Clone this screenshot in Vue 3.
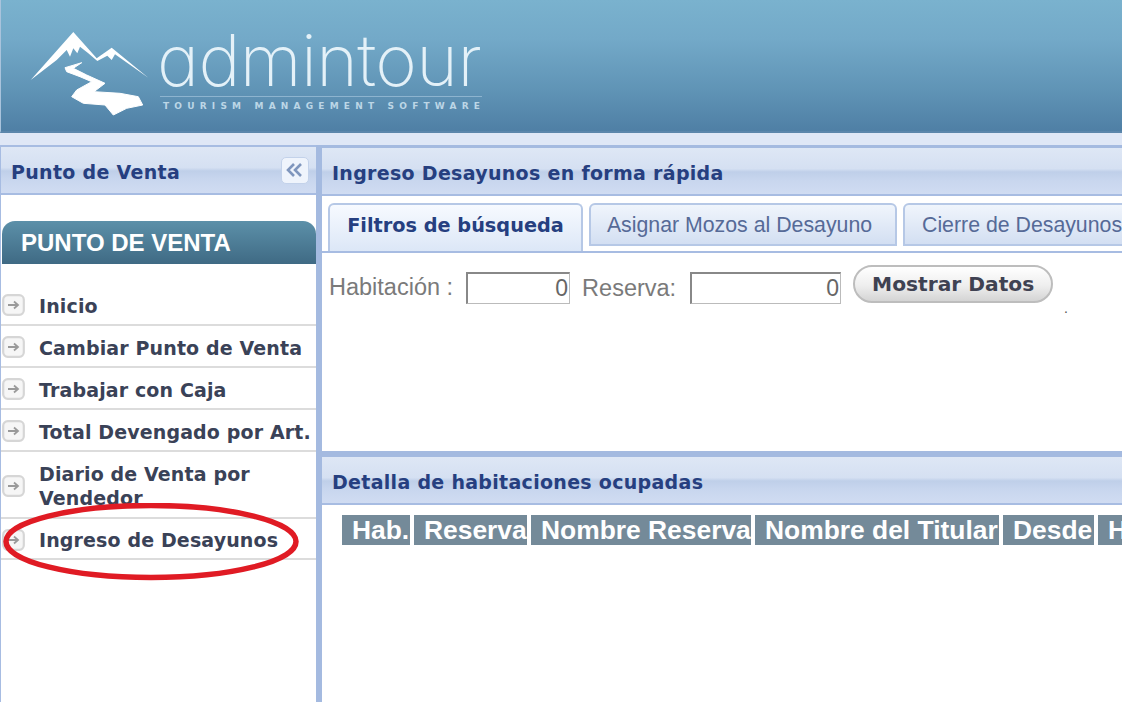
<script setup>
const menu = [
  { label: 'Inicio', cls: 'h42' },
  { label: 'Cambiar Punto de Venta', cls: 'h42' },
  { label: 'Trabajar con Caja', cls: 'h42' },
  { label: 'Total Devengado por Art.', cls: 'h42' },
  { label: 'Diario de Venta por Vendedor', cls: 'h67' },
  { label: 'Ingreso de Desayunos', cls: 'h41' },
]
const columns = [
  { label: 'Hab.', w: 68 },
  { label: 'Reserva', w: 113 },
  { label: 'Nombre Reserva', w: 220 },
  { label: 'Nombre del Titular', w: 244 },
  { label: 'Desde', w: 91 },
  { label: 'Hasta', w: 91 },
]
</script>

<template>
  <div class="page">
    <header class="banner">
      <div class="logo">
        <svg class="mark" viewBox="0 0 130 90" width="130" height="90">
          <path d="M0.7 48 L43.3 0 L66.7 26.3 L81.7 15.7 L118.3 45.7 L85 22.3 L81.7 28 L77.3 23.7 L67.3 29 L58.3 21.3 L50 14.7 L47.3 21.3 L43.3 16.3 L40 24.7 L36.7 18 L26.7 28 Z" fill="#fff" />
          <path d="M35 35.7 L51.7 30.7 L43.3 36.3 L56.7 43 L75 51.3 L64 59.7 L90 61.3 L108.3 64.7 L112.7 73 L96.7 76.3 L83.3 83 L75 73 L53.3 71.3 L41.7 64.7 L46.7 58 L61.7 49.7 L50 44.7 L36.7 39.7 Z" fill="#fff" stroke="#fff" stroke-width="1" stroke-linejoin="round" />
        </svg>
        <div class="brand">
          <div class="word">admintour</div>
          <div class="tag">TOURISM MANAGEMENT SOFTWARE</div>
        </div>
      </div>
    </header>

    <div class="workspace">
      <aside class="side">
        <div class="panel-head side-head">
          <span>Punto de Venta</span>
          <button class="collapse" aria-label="Contraer">
            <svg viewBox="0 0 20 16" width="20" height="16">
              <path d="M9 2 L3 8 L9 14 M16 2 L10 8 L16 14" fill="none" stroke="#7f96bd" stroke-width="2.6" />
            </svg>
          </button>
        </div>
        <div class="side-body">
          <h2 class="section">PUNTO DE VENTA</h2>
          <ul class="menu">
            <li v-for="item in menu" :key="item.label" :class="item.cls">
              <svg class="arrow" viewBox="0 0 23 22" width="23" height="22">
                <rect x="1.2" y="1.2" width="20.6" height="19.6" rx="4.5" fill="#f6f6f6" stroke="#d6d6d6" stroke-width="2.2" />
                <path d="M6 11 H15 M12 7.5 L16 11 L12 14.5" fill="none" stroke="#9a9a9a" stroke-width="1.8" />
              </svg>
              <span class="menu-text">{{ item.label }}</span>
            </li>
          </ul>
          <svg class="circle" viewBox="0 0 296 78" width="296" height="78">
            <ellipse cx="148" cy="38.5" rx="145" ry="36" fill="none" stroke="#e01b24" stroke-width="5.5" />
          </svg>
        </div>
      </aside>

      <main class="content">
        <section class="filters">
          <div class="panel-head">Ingreso Desayunos en forma rápida</div>
          <nav class="tabs">
            <div class="tab active">Filtros de búsqueda</div>
            <div class="tab t2">Asignar Mozos al Desayuno</div>
            <div class="tab t3">Cierre de Desayunos</div>
          </nav>
          <div class="form">
            <label class="lab">Habitación :</label>
            <input class="num n1" value="0" />
            <label class="lab l2">Reserva:</label>
            <input class="num n2" value="0" />
            <button class="show">Mostrar Datos</button>
            <span class="dot">.</span>
          </div>
        </section>
        <section class="detail">
          <div class="panel-head">Detalla de habitaciones ocupadas</div>
          <div class="cols">
            <div v-for="c in columns" :key="c.label" class="col" :style="{ flexBasis: c.w + 'px' }">{{ c.label }}</div>
          </div>
        </section>
      </main>
    </div>
  </div>
</template>

<style scoped>
.page {
  width: 1122px;
  height: 716px;
  overflow: hidden;
  background: #fff;
  font-family: "Liberation Sans", Arial, sans-serif;
}
.banner {
  height: 133px;
  box-sizing: border-box;
  border-left: 1px solid #a9c3dc;
  border-bottom: 2px solid #5b86ab;
  background: linear-gradient(#7ab2ce, #73a9c8 30%, #5f93b5 70%, #4f7fa5);
  padding: 32px 0 0 29px;
}
.logo { display: flex; align-items: flex-start; }
.mark { flex: none; overflow: visible; }
.brand { width: 322px; }
.word {
  font-family: Inter, "Liberation Sans", sans-serif;
  font-feature-settings: "cv11" 1;
  font-weight: 250;
  font-size: 71px;
  line-height: 56px;
  height: 62px;
  margin-left: -3px;
  letter-spacing: -0.6px;
  color: #e4f1f8;
  white-space: nowrap;
}
.tag {
  margin-top: 2px;
  border-top: 1px solid #8db4cf;
  padding: 5px 0 0 3px;
  font-family: "DejaVu Sans", sans-serif;
  font-weight: 700;
  font-size: 9px;
  letter-spacing: 5.2px;
  line-height: 9px;
  color: #bcd6e6;
  white-space: nowrap;
}
.workspace {
  height: 569px;
  box-sizing: border-box;
  background: #dfe7f6;
  padding-top: 12px;
  display: grid;
  grid-template-columns: 316px 6px 1fr;
  grid-template-rows: 557px;
}
.side {
  grid-column: 1;
  display: flex;
  flex-direction: column;
  background: #fff;
  border-left: 1px solid #a7bce2;
  border-top: 2px solid #a7bce2;
  box-sizing: border-box;
}
.content {
  grid-column: 2 / 4;
  border-left: 6px solid #a4bae0;
  display: flex;
  flex-direction: column;
  background: #fff;
  min-width: 0;
}
.panel-head {
  box-sizing: border-box;
  height: 48px;
  flex: none;
  display: flex;
  align-items: center;
  padding: 3px 0 0 10px;
  font-family: "DejaVu Sans", sans-serif;
  font-weight: 700;
  font-size: 19px;
  letter-spacing: 0.3px;
  color: #263f80;
  background: linear-gradient(#dee7f5, #d5e0f2 45%, #bfcfe9 52%, #c8d6ee 70%, #d0dcf2);
  border-bottom: 2px solid #a7bce2;
  white-space: nowrap;
}
.side-head {
  justify-content: space-between;
  padding: 0 7px 0 10px;
}
.side-head span { margin-top: 4px; }
.collapse {
  width: 28px;
  height: 27px;
  padding: 0;
  display: flex;
  align-items: center;
  justify-content: center;
  background: #eff4fc;
  border: 1px solid #c3d2ea;
  border-radius: 5px;
}
.side-body { position: relative; flex: 1; padding-top: 26px; }
.section {
  margin: 0 0 0 1px;
  height: 43px;
  box-sizing: border-box;
  padding-left: 19px;
  display: flex;
  align-items: center;
  border-radius: 13px 13px 0 0;
  background: linear-gradient(#5c90a9, #3f6a84);
  color: #fff;
  font-size: 24px;
  font-weight: 700;
}
.menu { list-style: none; margin: 20px 0 0; padding: 0; }
.menu li {
  box-sizing: border-box;
  display: flex;
  align-items: center;
  padding-left: 1px;
  border-bottom: 2px solid #dcdcdc;
  font-family: "DejaVu Sans", sans-serif;
  font-weight: 700;
  font-size: 19px;
  line-height: 24px;
  color: #3a4257;
  letter-spacing: 0.13px;
}
.menu .arrow { flex: none; margin: 2px 14px 0 0; }
.menu-text { padding-top: 2px; }
.h42 .menu-text { padding-top: 4px; }
.h42 { height: 42px; }
.h67 { height: 67px; }
.h41 { height: 41px; }
.circle { position: absolute; left: 2px; top: 308px; }
.filters { height: 306px; box-sizing: border-box; display: flex; flex-direction: column; border-top: 3px solid #a4bae0; }
.tabs {
  height: 57px;
  box-sizing: border-box;
  display: flex;
  align-items: flex-start;
  padding: 7px 0 0 6px;
  border-bottom: 2px solid #a7bce2;
  background: #fff;
}
.tab {
  box-sizing: border-box;
  height: 43px;
  margin-right: 6px;
  flex: none;
  display: flex;
  align-items: center;
  justify-content: center;
  padding-top: 1px;
  background: linear-gradient(#f0f5fc, #d3dff2);
  border: 2px solid #b6c8e6;
  border-radius: 6px 6px 0 0;
  color: #566a97;
  font-size: 21.3px;
  white-space: nowrap;
}
.tab.active {
  width: 255px;
  height: 48px;
  padding: 0 0 5px;
  border-bottom: 0;
  background: linear-gradient(#f7faff, #dce7f7);
  color: #263f80;
  font-family: "DejaVu Sans", sans-serif;
  font-weight: 700;
  font-size: 19.3px;
}
.t2 { width: 308px; padding-right: 7px; }
.t3 { width: 240px; justify-content: flex-start; padding-left: 17px; }
.form {
  position: relative;
  display: flex;
  align-items: flex-start;
  padding: 12px 0 0 7px;
  color: #7a7a7a;
  font-size: 23.5px;
}
.lab { margin-top: 9px; line-height: 26px; }
.l2 { margin-left: 12px; margin-top: 10px; }
.num {
  box-sizing: border-box;
  height: 32px;
  margin-top: 7px;
  padding: 0 1px 0 0;
  text-align: right;
  font-family: "Liberation Sans", sans-serif;
  font-size: 23px;
  color: #666;
  background: #fff;
  border: 1px solid #bbb;
  border-top: 2px solid #888;
  border-left: 2px solid #888;
  outline: none;
}
.n1 { width: 104px; margin-left: 13px; }
.n2 { width: 151px; margin-left: 14px; }
.show {
  box-sizing: border-box;
  width: 200px;
  height: 38px;
  margin-left: 12px;
  border-radius: 19px;
  border: 2px solid #bdbdbd;
  background: linear-gradient(#fff, #eee 55%, #d4d4d4);
  font-family: "DejaVu Sans", sans-serif;
  font-weight: 700;
  font-size: 20.2px;
  color: #3f4252;
  padding: 0;
  white-space: nowrap;
}
.dot { position: absolute; left: 742px; top: 47px; font-size: 14px; color: #555; }
.detail { flex: 1; border-top: 6px solid #a4bae0; display: flex; flex-direction: column; }
.cols { display: flex; gap: 4px; margin: 10px 0 0 20px; }
.col {
  flex: none;
  box-sizing: border-box;
  height: 30px;
  line-height: 30px;
  padding-left: 10px;
  background: #748a99;
  color: #fff;
  font-size: 26.4px;
  font-weight: 700;
  overflow: hidden;
  white-space: nowrap;
}
</style>
